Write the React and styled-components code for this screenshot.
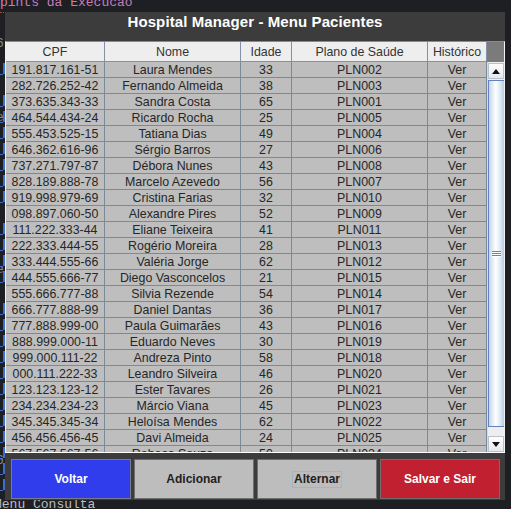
import React from 'react';
import styled, { createGlobalStyle } from 'styled-components';

const GlobalStyle = createGlobalStyle`
  html, body {
    margin: 0;
    padding: 0;
    background: #1e1f22;
  }
  body {
    font-family: "Liberation Sans", Arial, sans-serif;
  }
`;

const Desktop = styled.div`
  position: relative;
  width: 511px;
  height: 509px;
  overflow: hidden;
  background: #1e1f22;
`;

const IdeText = styled.div`
  position: absolute;
  left: ${(p) => p.$x}px;
  top: ${(p) => p.$y}px;
  font-family: "Liberation Mono", "DejaVu Sans Mono", monospace;
  font-size: 13px;
  line-height: 16px;
  white-space: pre;
  color: ${(p) => p.$color};
`;

const Squiggle = styled.div`
  position: absolute;
  left: 0;
  top: 10px;
  width: 6px;
  height: 2px;
  border-bottom: 1px dotted #bc3f3c;
`;

const GutterMark = styled.div`
  position: absolute;
  left: 3px;
  top: ${(p) => p.$y}px;
  width: 2px;
  height: 11px;
  background: #3d6fd0;

  &::after {
    content: '';
    position: absolute;
    left: -3px;
    bottom: -1px;
    width: 3px;
    height: 1px;
    background: #3d6fd0;
  }
`;

const Dialog = styled.div`
  position: absolute;
  left: 5px;
  top: 12px;
  width: 500px;
  height: 488px;
  background: #3c3c3c;
  display: flex;
  flex-direction: column;
`;

const TitleBar = styled.div`
  height: 29px;
  line-height: 20px;
  text-align: center;
  color: #ffffff;
  font-weight: bold;
  font-size: 15px;
  letter-spacing: 0.1px;
`;

const ScrollPane = styled.div`
  width: 500px;
  height: 412px;
  box-sizing: border-box;
  border-top: 1px solid #7f8c99;
  border-left: 1px solid #f2f2f2;
  border-right: 1px solid #f2f2f2;
  border-bottom: 1px solid #ffffff;
  display: flex;
`;

const Table = styled.div`
  width: 481px;
  display: flex;
  flex-direction: column;
  overflow: hidden;
`;

const Row = styled.div`
  display: flex;
  flex-shrink: 0;
`;

const HeaderCell = styled.div`
  width: ${(p) => p.$w}px;
  height: 20px;
  box-sizing: border-box;
  display: flex;
  align-items: center;
  justify-content: center;
  background: #eeeeee;
  border-right: 1px solid #8393a4;
  border-bottom: 1px solid #8393a4;
  font-size: 12.4px;
  color: #333333;
`;

const Viewport = styled.div`
  flex: 1;
  overflow: hidden;
  background: #bebebe;
`;

const Cell = styled.div`
  width: ${(p) => p.$w}px;
  height: 16px;
  box-sizing: border-box;
  border-right: 1px solid #7b8a99;
  border-bottom: 1px solid #7b8a99;
  background: #bebebe;
  text-align: center;
  line-height: 16px;
  font-size: 12.4px;
  color: #262626;
  white-space: nowrap;
  overflow: hidden;
`;

const ScrollColumn = styled.div`
  width: 17px;
  display: flex;
  flex-direction: column;
`;

const Corner = styled.div`
  height: 20px;
  background: #7b7b7b;
  flex-shrink: 0;
`;

const ScrollBar = styled.div`
  flex: 1;
  display: flex;
  flex-direction: column;
  background: #eeeeee;
  border-left: 1px solid #dadada;
`;

const ArrowButton = styled.div`
  height: 16px;
  flex-shrink: 0;
  box-sizing: border-box;
  border: 1px solid #b8c2cc;
  background: linear-gradient(to bottom, #ffffff, #e4e8ee);
  display: flex;
  align-items: center;
  justify-content: center;
  margin-top: ${(p) => (p.$top ? '1px' : '0')};
`;

const Thumb = styled.div`
  height: 347px;
  margin-top: 1px;
  flex-shrink: 0;
  box-sizing: border-box;
  border-left: 1px solid #6382bf;
  border-top: 1px solid #6382bf;
  border-bottom: 1px solid #6382bf;
  background: linear-gradient(to right, #c3d6ee, #ffffff 45%, #dce8f6 75%, #b6cbe6);
  display: flex;
  align-items: center;
  justify-content: center;
`;

const Grip = styled.div`
  width: 9px;
  display: flex;
  flex-direction: column;
  gap: 1px;

  span {
    display: block;
    height: 1px;
    background: #6382bf;
    box-shadow: 0 1px 0 #ffffff;
  }
`;

const Track = styled.div`
  flex: 1;
`;

const ButtonBar = styled.div`
  margin-top: 6px;
  height: 40px;
  padding: 0 5px 0 6px;
  display: flex;
  gap: 3px;
`;

const ActionButton = styled.div`
  width: 120px;
  height: 40px;
  box-sizing: border-box;
  border: 1px solid ${(p) => p.$border};
  background: ${(p) => p.$bg};
  color: ${(p) => p.$fg};
  font-weight: bold;
  font-size: 12px;
  display: flex;
  align-items: center;
  justify-content: center;
`;

const FocusRing = styled.span`
  border: 1px solid #a3b4c9;
  padding: 1px 1px;
  line-height: 13px;
`;

const columns = [
  { title: 'CPF', w: 99 },
  { title: 'Nome', w: 136 },
  { title: 'Idade', w: 51 },
  { title: 'Plano de Saúde', w: 136 },
  { title: 'Histórico', w: 59 },
];

const patients = [
  ['191.817.161-51', 'Laura Mendes', '33', 'PLN002'],
  ['282.726.252-42', 'Fernando Almeida', '38', 'PLN003'],
  ['373.635.343-33', 'Sandra Costa', '65', 'PLN001'],
  ['464.544.434-24', 'Ricardo Rocha', '25', 'PLN005'],
  ['555.453.525-15', 'Tatiana Dias', '49', 'PLN004'],
  ['646.362.616-96', 'Sérgio Barros', '27', 'PLN006'],
  ['737.271.797-87', 'Débora Nunes', '43', 'PLN008'],
  ['828.189.888-78', 'Marcelo Azevedo', '56', 'PLN007'],
  ['919.998.979-69', 'Cristina Farias', '32', 'PLN010'],
  ['098.897.060-50', 'Alexandre Pires', '52', 'PLN009'],
  ['111.222.333-44', 'Eliane Teixeira', '41', 'PLN011'],
  ['222.333.444-55', 'Rogério Moreira', '28', 'PLN013'],
  ['333.444.555-66', 'Valéria Jorge', '62', 'PLN012'],
  ['444.555.666-77', 'Diego Vasconcelos', '21', 'PLN015'],
  ['555.666.777-88', 'Silvia Rezende', '54', 'PLN014'],
  ['666.777.888-99', 'Daniel Dantas', '36', 'PLN017'],
  ['777.888.999-00', 'Paula Guimarães', '43', 'PLN016'],
  ['888.999.000-11', 'Eduardo Neves', '30', 'PLN019'],
  ['999.000.111-22', 'Andreza Pinto', '58', 'PLN018'],
  ['000.111.222-33', 'Leandro Silveira', '46', 'PLN020'],
  ['123.123.123-12', 'Ester Tavares', '26', 'PLN021'],
  ['234.234.234-23', 'Márcio Viana', '45', 'PLN023'],
  ['345.345.345-34', 'Heloísa Mendes', '62', 'PLN022'],
  ['456.456.456-45', 'Davi Almeida', '24', 'PLN025'],
  ['567.567.567-56', 'Rebeca Souza', '50', 'PLN024'],
];

const gutterMarks = [63, 95, 111, 127, 143, 159, 175, 191, 223, 239, 255, 271, 303, 319, 335, 351, 367, 383, 399, 415, 431, 447, 463, 479];

const Arrow = ({ up }) => (
  <svg width="8" height="5" viewBox="0 0 8 5">
    <path d={up ? 'M0 5 L4 0 L8 5 Z' : 'M0 0 L4 5 L8 0 Z'} fill="#111" />
  </svg>
);

export default function App() {
  return (
    <>
      <GlobalStyle />
      <Desktop>
        <IdeText $x={0} $y={-5} $color="#c77dbb">pints da Execucao</IdeText>
        <Squiggle />
        <IdeText $x={-6} $y={497} $color="#bcbec4">Menu Consulta</IdeText>
        <IdeText $x={-4} $y={36} $color="#8a8a8a">6</IdeText>
        <IdeText $x={-4} $y={110} $color="#8a8a8a">e</IdeText>
        <IdeText $x={-4} $y={262} $color="#8a8a8a">e</IdeText>
        <IdeText $x={-4} $y={453} $color="#8a8a8a">6</IdeText>
        {gutterMarks.map((y) => (
          <GutterMark key={y} $y={y} />
        ))}

        <Dialog>
          <TitleBar>Hospital Manager - Menu Pacientes</TitleBar>
          <ScrollPane>
            <Table>
              <Row>
                {columns.map((c) => (
                  <HeaderCell key={c.title} $w={c.w}>
                    {c.title}
                  </HeaderCell>
                ))}
              </Row>
              <Viewport>
                {patients.map((p) => (
                  <Row key={p[0]}>
                    <Cell $w={columns[0].w}>{p[0]}</Cell>
                    <Cell $w={columns[1].w}>{p[1]}</Cell>
                    <Cell $w={columns[2].w}>{p[2]}</Cell>
                    <Cell $w={columns[3].w}>{p[3]}</Cell>
                    <Cell $w={columns[4].w}>Ver</Cell>
                  </Row>
                ))}
              </Viewport>
            </Table>
            <ScrollColumn>
              <Corner />
              <ScrollBar>
                <ArrowButton $top>
                  <Arrow up />
                </ArrowButton>
                <Thumb>
                  <Grip>
                    <span />
                    <span />
                    <span />
                  </Grip>
                </Thumb>
                <Track />
                <ArrowButton>
                  <Arrow />
                </ArrowButton>
              </ScrollBar>
            </ScrollColumn>
          </ScrollPane>
          <ButtonBar>
            <ActionButton $bg="#2f3ded" $fg="#ffffff" $border="#7a7a8c">
              Voltar
            </ActionButton>
            <ActionButton $bg="#bdbdbd" $fg="#222222" $border="#6e6e6e">
              Adicionar
            </ActionButton>
            <ActionButton $bg="#bdbdbd" $fg="#222222" $border="#6e6e6e">
              <FocusRing>Alternar</FocusRing>
            </ActionButton>
            <ActionButton $bg="#c0202f" $fg="#ffffff" $border="#6e6e6e">
              Salvar e Sair
            </ActionButton>
          </ButtonBar>
        </Dialog>
      </Desktop>
    </>
  );
}
